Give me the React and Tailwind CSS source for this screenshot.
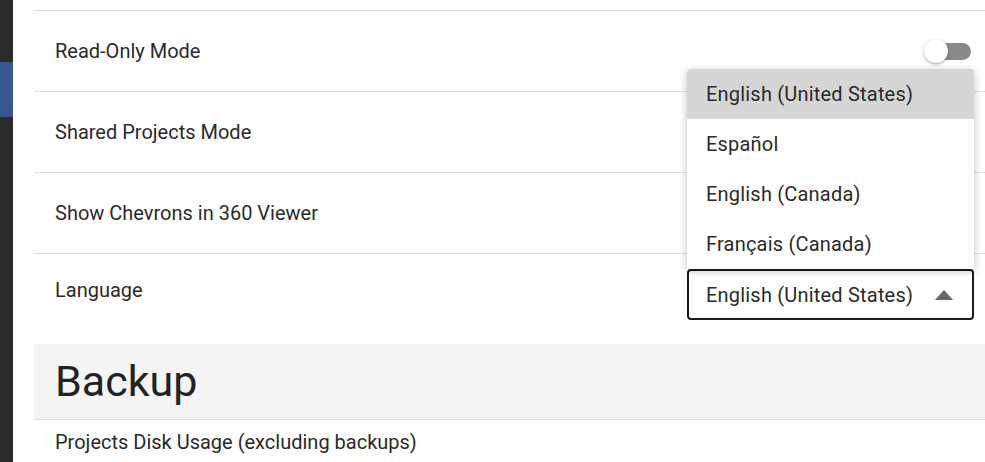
import { useState } from "react";

const languages = [
  "English (United States)",
  "Español",
  "English (Canada)",
  "Français (Canada)",
];

function Toggle() {
  return (
    <div className="relative w-[47px] h-[24px] flex items-center">
      <div className="absolute right-0 w-[42px] h-[17px] rounded-full bg-[#8a8a8a]" />
      <div className="absolute left-0 w-[24px] h-[24px] rounded-full bg-white shadow-[0_1px_3px_rgba(0,0,0,0.35)]" />
    </div>
  );
}

function Row({ label, children }) {
  return (
    <div className="h-[81px] border-t border-[#e0e0e0] flex items-center justify-between pl-[21px] pr-[14px]">
      <span>{label}</span>
      {children}
    </div>
  );
}

export default function App() {
  const [selected] = useState(languages[0]);

  return (
    <div
      className="flex w-[985px] h-[462px] overflow-hidden bg-white text-[20px] text-[#2a2a2a]"
      style={{ fontFamily: "Roboto, 'Liberation Sans', sans-serif" }}
    >
      <div className="w-[13px] shrink-0 bg-[#2b2b2b] pt-[62px]">
        <div className="h-[55px] bg-[#36578f]" />
      </div>

      <div className="flex-1 pl-[21px] pt-[10px]">
        <Row label="Read-Only Mode">
          <Toggle />
        </Row>
        <Row label="Shared Projects Mode" />
        <Row label="Show Chevrons in 360 Viewer">
          <Toggle />
        </Row>

        <div className="h-[91px] border-t border-[#e0e0e0] flex justify-between pl-[21px] pr-[11px]">
          <span className="mt-[21px]">Language</span>
          <div className="relative mt-[15px]">
            <div className="absolute bottom-full left-0 w-[287px] bg-white rounded-t-[4px] shadow-[0_2px_8px_rgba(0,0,0,0.25)] overflow-hidden">
              {languages.map((lang) => (
                <div
                  key={lang}
                  className={
                    "h-[50px] flex items-center pl-[19px] tracking-[0.2px] " +
                    (lang === selected ? "bg-[#d6d6d6]" : "bg-white")
                  }
                >
                  {lang}
                </div>
              ))}
            </div>
            <div className="w-[287px] h-[51px] border-2 border-[#1a1a1a] rounded-[4px] flex items-center justify-between pl-[17px] pr-[19px]">
              <span className="tracking-[0.2px]">{selected}</span>
              <svg width="18" height="10" viewBox="0 0 18 10">
                <path d="M9 0 L18 10 L0 10 Z" fill="#666" />
              </svg>
            </div>
          </div>
        </div>

        <div className="h-[76px] bg-[#f4f4f4] border-b border-[#dedede] flex items-center pl-[21px]">
          <h2 className="text-[43px] leading-none text-[#222]">Backup</h2>
        </div>
        <div className="pl-[21px] pt-[7px]">Projects Disk Usage (excluding backups)</div>
      </div>
    </div>
  );
}
